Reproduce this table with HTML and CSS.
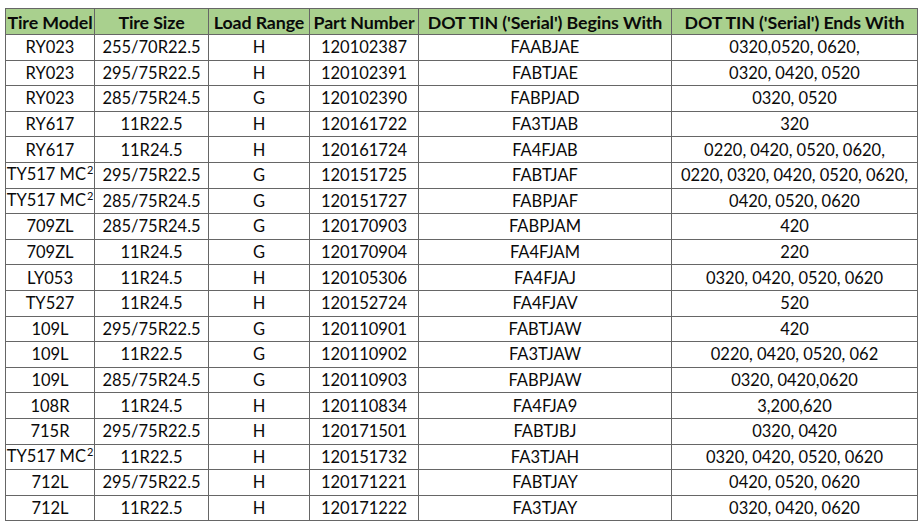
FILE: index.html
```html
<!DOCTYPE html>
<html>
<head>
<meta charset="utf-8">
<link rel="stylesheet" href="styles.css">
</head>
<body>
<table class="tires">
<colgroup>
<col class="c1"><col class="c2"><col class="c3"><col class="c4"><col class="c5"><col class="c6">
</colgroup>
<thead>
<tr><th>Tire Model</th><th>Tire Size</th><th>Load Range</th><th>Part Number</th><th>DOT TIN ('Serial') Begins With</th><th>DOT TIN ('Serial') Ends With</th></tr>
</thead>
<tbody>
<tr><td>RY023</td><td>255/70R22.5</td><td>H</td><td>120102387</td><td>FAABJAE</td><td>0320,0520, 0620,</td></tr>
<tr><td>RY023</td><td>295/75R22.5</td><td>H</td><td>120102391</td><td>FABTJAE</td><td>0320, 0420, 0520</td></tr>
<tr><td>RY023</td><td>285/75R24.5</td><td>G</td><td>120102390</td><td>FABPJAD</td><td>0320, 0520</td></tr>
<tr><td>RY617</td><td>11R22.5</td><td>H</td><td>120161722</td><td>FA3TJAB</td><td>320</td></tr>
<tr><td>RY617</td><td>11R24.5</td><td>H</td><td>120161724</td><td>FA4FJAB</td><td>0220, 0420, 0520, 0620,</td></tr>
<tr><td>TY517 MC<span class="sup">2</span></td><td>295/75R22.5</td><td>G</td><td>120151725</td><td>FABTJAF</td><td>0220, 0320, 0420, 0520, 0620,</td></tr>
<tr><td>TY517 MC<span class="sup">2</span></td><td>285/75R24.5</td><td>G</td><td>120151727</td><td>FABPJAF</td><td>0420, 0520, 0620</td></tr>
<tr><td>709ZL</td><td>285/75R24.5</td><td>G</td><td>120170903</td><td>FABPJAM</td><td>420</td></tr>
<tr><td>709ZL</td><td>11R24.5</td><td>G</td><td>120170904</td><td>FA4FJAM</td><td>220</td></tr>
<tr><td>LY053</td><td>11R24.5</td><td>H</td><td>120105306</td><td>FA4FJAJ</td><td>0320, 0420, 0520, 0620</td></tr>
<tr><td>TY527</td><td>11R24.5</td><td>H</td><td>120152724</td><td>FA4FJAV</td><td>520</td></tr>
<tr><td>109L</td><td>295/75R22.5</td><td>G</td><td>120110901</td><td>FABTJAW</td><td>420</td></tr>
<tr><td>109L</td><td>11R22.5</td><td>G</td><td>120110902</td><td>FA3TJAW</td><td>0220, 0420, 0520, 062</td></tr>
<tr><td>109L</td><td>285/75R24.5</td><td>G</td><td>120110903</td><td>FABPJAW</td><td>0320, 0420,0620</td></tr>
<tr><td>108R</td><td>11R24.5</td><td>H</td><td>120110834</td><td>FA4FJA9</td><td>3,200,620</td></tr>
<tr><td>715R</td><td>295/75R22.5</td><td>H</td><td>120171501</td><td>FABTJBJ</td><td>0320, 0420</td></tr>
<tr><td>TY517 MC<span class="sup">2</span></td><td>11R22.5</td><td>H</td><td>120151732</td><td>FA3TJAH</td><td>0320, 0420, 0520, 0620</td></tr>
<tr><td>712L</td><td>295/75R22.5</td><td>H</td><td>120171221</td><td>FABTJAY</td><td>0420, 0520, 0620</td></tr>
<tr><td>712L</td><td>11R22.5</td><td>H</td><td>120171222</td><td>FA3TJAY</td><td>0320, 0420, 0620</td></tr>
</tbody>
</table>
</body>
</html>
```
FILE: styles.css
```css
html, body {
  background: #ffffff;
}
body {
  margin: 8px 0 0 5px;
  font-family: Lato, "Liberation Sans", sans-serif;
  font-size: 16.5px;
  color: #0a0a0a;
}
.tires {
  border-collapse: collapse;
  table-layout: fixed;
  width: 912px;
}
.c1 { width: 89px; }
.c2 { width: 114px; }
.c3 { width: 101px; }
.c4 { width: 109px; }
.c5 { width: 253px; }
.c6 { width: 246px; }
.tires th,
.tires td {
  border: 1px solid #666666;
  padding: 0;
  text-align: center;
  white-space: nowrap;
  overflow: hidden;
  line-height: 20px;
}
.tires th {
  background: #a9d08e;
  font-weight: 700;
  font-size: 17.8px;
  letter-spacing: -0.1px;
  height: 25px;
}
.tires td {
  height: 24.6px;
}
.sup {
  font-size: 11px;
  position: relative;
  top: -6px;
  margin-left: 1px;
}
```
